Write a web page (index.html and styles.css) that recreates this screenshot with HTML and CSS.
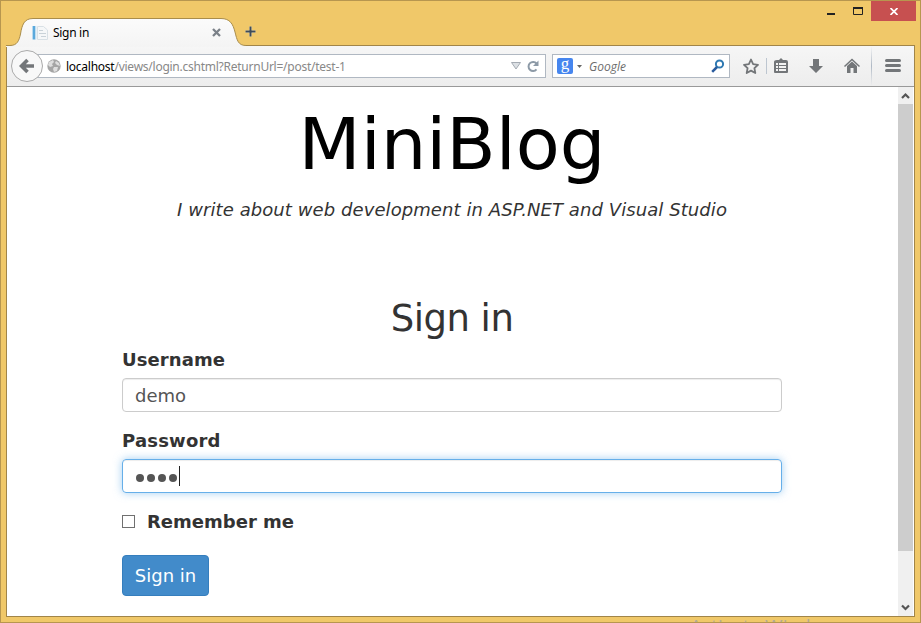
FILE: index.html
```html
<!DOCTYPE html>
<html lang="en">
<head>
<meta charset="utf-8">
<title>Sign in</title>
<link rel="stylesheet" href="styles.css">
</head>
<body>
<div class="window">
  <header class="titlebar">
    <div class="tab">
      <svg class="tab-shape" width="240" height="29" viewBox="0 0 240 29">
        <defs><linearGradient id="tabfill" x1="0" y1="0" x2="0" y2="1"><stop offset="0" stop-color="#fbfbfb"/><stop offset="1" stop-color="#f4f4f4"/></linearGradient></defs>
        <path d="M0 29V27.500H4C11 27.500 13 23 14.500 16C16 7 18 .5 27 .5H215C224 .5 227 6 229 14C231 22 232 27.500 240 27.500V29Z" fill="url(#tabfill)"/>
        <path d="M0 27.500H4C11 27.500 13 23 14.500 16C16 7 18 .5 27 .5H215C224 .5 227 6 229 14C231 22 232 27.500 240 27.500" fill="none" stroke="#a98d4b"/>
      </svg>
      <svg class="favicon" width="16" height="16" viewBox="0 0 16 16">
        <path d="M1 1H3.500V14.500H1Z" fill="#5aa9dc"/><path d="M0 1H1V14.500H0Z" fill="#b8daf0"/><path d="M3.500 1H4.500V14.500H3.500Z" fill="#d5eaf6"/>
        <path d="M5.500 1.500H11.500L15.500 5V14.500H5.500Z" fill="#f5f7f8" stroke="#d8e0e5"/><path d="M7 5.500H11M7 8.500H14M9 11.500H14" stroke="#c9d2d8"/>
      </svg>
      <span class="tab-title">Sign in</span>
      <svg class="tab-close" width="9" height="9" viewBox="0 0 9 9"><path d="M1 1L8 8M8 1L1 8" stroke="#7b8188" stroke-width="2.300"/></svg>
    </div>
    <svg class="new-tab" width="11" height="11" viewBox="0 0 11 11"><path d="M5.500 .5V10.500M.5 5.500H10.500" stroke="#fbe3a9" stroke-width="3"/><path d="M5.500 .5V10.500M.5 5.500H10.500" stroke="#3f4c59" stroke-width="2"/></svg>
    <div class="controls">
      <svg width="46" height="20" viewBox="0 0 46 20"><path d="M2 12H10V14H2Z" fill="#222"/><path d="M28.500 7.500H37.500V13.500H28.500Z" fill="none" stroke="#222"/><path d="M28 6H38V8H28Z" fill="#222"/></svg>
      <div class="close"><svg width="8" height="7" viewBox="0 0 8 7"><path d="M.5 0L7.500 7M7.500 0L.5 7" stroke="#fff" stroke-width="1.700"/></svg></div>
    </div>
  </header>
  <main class="frame">
    <nav class="toolbar">
      <div class="address">
        <div class="back"><svg width="16" height="16" viewBox="0 0 16 16"><path d="M8.500 2L2.500 8L8.500 14M3 8H15" fill="none" stroke="#737679" stroke-width="3.600"/></svg></div>
        <svg class="globe" width="14" height="14" viewBox="0 0 14 14"><circle cx="7" cy="7" r="6.700" fill="#a5a5a5"/><path d="M2 3L6 1L7 3L5 5L6 7L3 8L1 6ZM9 2L12 4L13 7L10 6L8 4ZM7 8L11 8L10 12L7 13L6 10Z" fill="#dedede"/></svg>
        <span class="url"><b>localhost</b>/views/login.cshtml?ReturnUrl=/post/test-1</span>
        <svg class="drop" width="10" height="8" viewBox="0 0 10 8"><path d="M.5 .5H9.500L5 7Z" fill="#dce0e4" stroke="#a5abb3"/></svg>
        <svg class="reload" width="12" height="12" viewBox="0 0 12 12"><path d="M9.500 3.500A4.500 4.500 0 1 0 9.500 9.300" fill="none" stroke="#8d9aa7" stroke-width="2"/><path d="M11.500 .5V6H6Z" fill="#8d9aa7"/></svg>
      </div>
      <div class="search">
        <span class="engine">g</span>
        <svg class="caret" width="5" height="3" viewBox="0 0 5 3"><path d="M0 0H5L2.500 3Z" fill="#666"/></svg>
        <span class="hint">Google</span>
        <svg class="lens" width="14" height="14" viewBox="0 0 14 14"><circle cx="8.500" cy="5" r="3.600" fill="none" stroke="#2e79b2" stroke-width="2"/><path d="M6 8L1.200 12.800" stroke="#295b9d" stroke-width="2.500"/></svg>
      </div>
      <svg class="tools" width="171" height="40" viewBox="0 0 171 40">
        <defs><linearGradient id="divider" x1="0" y1="0" x2="0" y2="1"><stop offset="0" stop-color="#b7c0cb" stop-opacity="0"/><stop offset=".5" stop-color="#aeb8c4"/><stop offset="1" stop-color="#b7c0cb" stop-opacity="0"/></linearGradient></defs>
        <path d="M8 13.500L10.100 18.200L15 18.800L11.400 22.200L12.300 27L8 24.600L3.700 27L4.600 22.200L1 18.800L5.900 18.200Z" fill="none" stroke="#737679" stroke-width="1.800" stroke-linejoin="round"/>
        <path d="M23 12H24V28H23Z" fill="#bdc6d0"/>
        <path d="M34 14H36L38 12L40 14H43Q45 14 45 16V26Q45 27 44 27H32Q31 27 31 26V16Q31 14 34 14Z" fill="#737679"/>
        <path d="M33 17H35V19H33ZM36 17H43V19H36ZM33 20H35V22H33ZM36 20H43V22H36ZM33 23H35V25H33ZM36 23H43V25H36Z" fill="#f3f3f3"/>
        <path d="M70 13H76V20H80L73 27L66 20H70Z" fill="#737679"/>
        <path d="M101.500 20.500L109 13.500L116.500 20.500" fill="none" stroke="#737679" stroke-width="1.500"/><path d="M104 20L109 15.500L114 20V27H110.500V22H107.500V27H104Z" fill="#737679"/>
        <path d="M128 0H129V40H128Z" fill="url(#divider)"/>
        <path d="M143.500 14.500H156.500M143.500 19.500H156.500M143.500 24.500H156.500" stroke="#737679" stroke-width="3" stroke-linecap="round"/>
      </svg>
    </nav>
    <div class="viewport">
      <section class="page">
        <h1>MiniBlog</h1>
        <p class="tagline">I write about web development in ASP.NET and Visual Studio</p>
        <form class="login">
          <h2>Sign in</h2>
          <label class="username-label">Username</label>
          <div class="field"><span class="value">demo</span></div>
          <label class="password-label">Password</label>
          <div class="field focused"><span class="dot"></span><span class="dot"></span><span class="dot"></span><span class="dot"></span><span class="cursor"></span></div>
          <div class="remember"><span class="check"></span><label class="remember-label">Remember me</label></div>
          <button type="button"><span>Sign in</span></button>
        </form>
      </section>
      <div class="scrollbar">
        <svg width="15" height="17" viewBox="0 0 15 17"><path d="M4 11L7.500 7.500L11 11" fill="none" stroke="#555" stroke-width="2.200"/></svg>
        <div class="thumb"></div>
        <svg width="15" height="17" viewBox="0 0 15 17"><path d="M4 6.500L7.500 10L11 6.500" fill="none" stroke="#555" stroke-width="2.200"/></svg>
      </div>
    </div>
  </main>
  <div class="watermark">Activate Windows</div>
</div>
</body>
</html>
```
FILE: styles.css
```css
* { box-sizing: border-box; }
body { margin: 0; overflow: hidden; }
svg { display: block; flex: none; }
.window { position: relative; width: 921px; height: 623px; padding: 0 5px; border: 1px solid #b7964f; background: #f0c869; overflow: hidden; font-family: "Noto Sans", sans-serif; }
.titlebar { display: flex; height: 44px; }
.tab { position: relative; z-index: 1; display: flex; align-items: center; width: 239px; height: 29px; margin-top: 17px; padding-left: 26px; }
.tab-shape { position: absolute; left: 0; top: 0; }
.favicon, .tab-title, .tab-close { position: relative; }
.tab-title { margin-left: 5px; width: 159px; font-size: 12px; line-height: 27px; color: #000; letter-spacing: -.3px; white-space: nowrap; }
.tab-close { width: 9px; }
.new-tab { margin: 25px 0 0 0; }
.controls { display: flex; margin-left: auto; margin-right: -1px; }
.close { display: flex; align-items: center; justify-content: center; width: 45px; height: 20px; padding-top: 1px; background: #c75050; }
.frame { width: 909px; height: 572px; border: 1px solid #a18549; background: #fff; }
.toolbar { display: flex; align-items: center; height: 41px; padding-left: 20px; border-bottom: 1px solid #999; background: linear-gradient(#f6f6f6, #ededed); }
.address, .search { display: flex; align-items: center; height: 24px; border: 1px solid #b0b8c2; background: #fff; }
.address { width: 519px; border-left: 0; }
.back { display: flex; align-items: center; justify-content: center; flex: none; width: 32px; height: 32px; margin-left: -16px; border: 1px solid #aaa; border-radius: 50%; background: #f8f8f8; }
.globe { margin-left: 4px; }
.url { width: 445px; margin-left: 5px; color: #888; font-size: 12px; white-space: nowrap; letter-spacing: -.25px; }
.url b { font-weight: 400; color: #000; }
.reload { margin-left: 6px; }
.search { width: 178px; margin-left: 6px; padding-left: 4px; }
.engine { width: 16px; height: 16px; border-radius: 2px; background: #4686ef; color: #fff; font: 17px/11px "Liberation Serif", serif; text-align: center; }
.caret { margin-left: 4px; }
.hint { width: 122px; margin-left: 7px; color: #6d6d6d; font: italic 12px "Open Sans", sans-serif; }
.tools { margin-left: 13px; }
.viewport { display: flex; height: 529px; }
.page { width: 891px; padding-left: 115px; color: #333; font-family: "DejaVu Sans", sans-serif; white-space: nowrap; }
h1 { width: 660px; margin: 14px 0 0; color: #000; font-size: 72px; line-height: 86px; font-weight: 400; text-align: center; }
.tagline { width: 660px; margin: 12px 0 0; font-size: 18px; line-height: 22px; font-style: italic; letter-spacing: .08px; text-align: center; }
.login { width: 660px; }
h2 { margin: 75px 0 0; font-size: 37px; line-height: 46px; font-weight: 400; letter-spacing: -.5px; text-align: center; }
label { display: block; position: relative; top: 1px; font-size: 18px; line-height: 24px; font-weight: 700; }
.username-label { margin-top: 5px; letter-spacing: .1px; }
.field { display: flex; align-items: center; height: 34px; margin-top: 7px; padding-left: 12px; border: 1px solid #ccc; border-radius: 4px; box-shadow: inset 0 1px 1px rgba(0,0,0,.075); color: #555; font-size: 18px; }
.password-label { margin-top: 16px; letter-spacing: .2px; }
.focused { border-color: #66afe9; box-shadow: inset 0 1px 1px rgba(0,0,0,.075), 0 0 8px rgba(102,175,233,.6); }
.dot { width: 8px; height: 8px; margin: 3px 2px 0 1px; border-radius: 50%; background: #555; }
.cursor { width: 1px; height: 20px; background: #222; }
.remember { display: flex; align-items: center; height: 24px; margin-top: 16px; }
.check { width: 13px; height: 13px; border: 1px solid #707070; }
.remember-label { margin-left: 12px; }
button { width: 87px; height: 41px; margin: 22px 0 0; padding: 0; border: 1px solid #357ebd; border-radius: 4px; background: #428bca; color: #fff; font: 18px "DejaVu Sans", sans-serif; }
.scrollbar { width: 15px; height: 529px; background: #f0f0f0; }
.thumb { height: 447px; margin-bottom: 48px; background: #cdcdcd; }
.watermark { position: absolute; left: 689px; bottom: -1px; height: 6px; overflow: hidden; color: #b3aa94; font: 19px/18px "Open Sans", sans-serif; white-space: nowrap; }
```
